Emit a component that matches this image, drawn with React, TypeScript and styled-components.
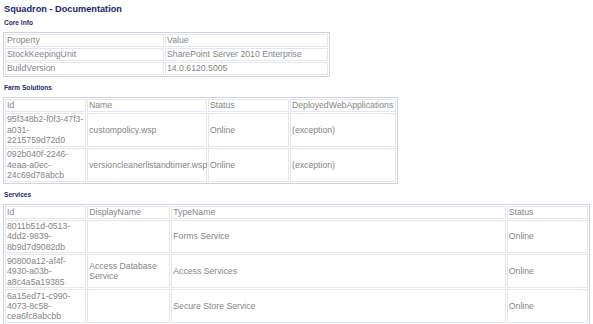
import React from 'react'
import styled, { createGlobalStyle } from 'styled-components'

const GlobalStyle = createGlobalStyle`
    body {
        margin: 0;
        padding: 3px;
        background: #ffffff;
        font-family: "Liberation Sans", Arial, sans-serif;
    }
`

const Title = styled.h1`
    margin: 0 0 3px 1px;
    font-size: 9.2px;
    line-height: 12px;
    font-weight: bold;
    color: #1d1f6b;
`

const Heading = styled.h2`
    margin: 0 0 4px 1px;
    font-size: 6.6px;
    line-height: 10px;
    font-weight: bold;
    color: #1d1f6b;
`

const Table = styled.table<{ $width: number }>`
    width: ${p => p.$width}px;
    table-layout: fixed;
    border: 1px solid #cdd3e3;
    border-spacing: 1px;
    margin: 0 0 6px 0;
    font-size: 8.7px;
    line-height: 10.4px;
    color: #858585;
`

const Cell = styled.td`
    border: 1px solid #e3e6ee;
    padding: 0.3px 1px;
    vertical-align: middle;
    text-align: left;
    font-weight: normal;
`

type Row = string[]

interface GridProps {
    width: number
    cols: number[]
    head: Row
    rows: Row[]
}

const Grid: React.FC<GridProps> = ({ width, cols, head, rows }) => (
    <Table $width={width}>
        <colgroup>
            {cols.map((w, i) => <col key={i} style={{ width: w }} />)}
        </colgroup>
        <tbody>
            <tr>
                {head.map(h => <Cell key={h}>{h}</Cell>)}
            </tr>
            {rows.map((r, i) => (
                <tr key={i}>
                    {r.map((c, j) => <Cell key={j}>{c}</Cell>)}
                </tr>
            ))}
        </tbody>
    </Table>
)

const App: React.FC = () => (
    <>
        <GlobalStyle />
        <Title>Squadron - Documentation</Title>

        <Heading>Core Info</Heading>
        <Grid
            width={326}
            cols={[159, 163]}
            head={['Property', 'Value']}
            rows={[
                ['StockKeepingUnit', 'SharePoint Server 2010 Enterprise'],
                ['BuildVersion', '14.0.6120.5005'],
            ]}
        />

        <Heading>Farm Solutions</Heading>
        <Grid
            width={394}
            cols={[81, 120, 81, 106]}
            head={['Id', 'Name', 'Status', 'DeployedWebApplications']}
            rows={[
                ['95f348b2-f0f3-47f3-a031-2215759d72d0', 'custompolicy.wsp', 'Online', '(exception)'],
                ['092b040f-2246-4eaa-a0ec-24c69d78abcb', 'versioncleanerlistandtimer.wsp', 'Online', '(exception)'],
            ]}
        />

        <Heading>Services</Heading>
        <Grid
            width={587}
            cols={[81, 83, 334, 81]}
            head={['Id', 'DisplayName', 'TypeName', 'Status']}
            rows={[
                ['8011b51d-0513-4dd2-9839-8b9d7d9082db', '', 'Forms Service', 'Online'],
                ['90800a12-af4f-4930-a03b-a8c4a5a19385', 'Access Database Service', 'Access Services', 'Online'],
                ['6a15ed71-c990-4073-8c58-cea6fc8abcbb', '', 'Secure Store Service', 'Online'],
            ]}
        />
    </>
)

export default App
